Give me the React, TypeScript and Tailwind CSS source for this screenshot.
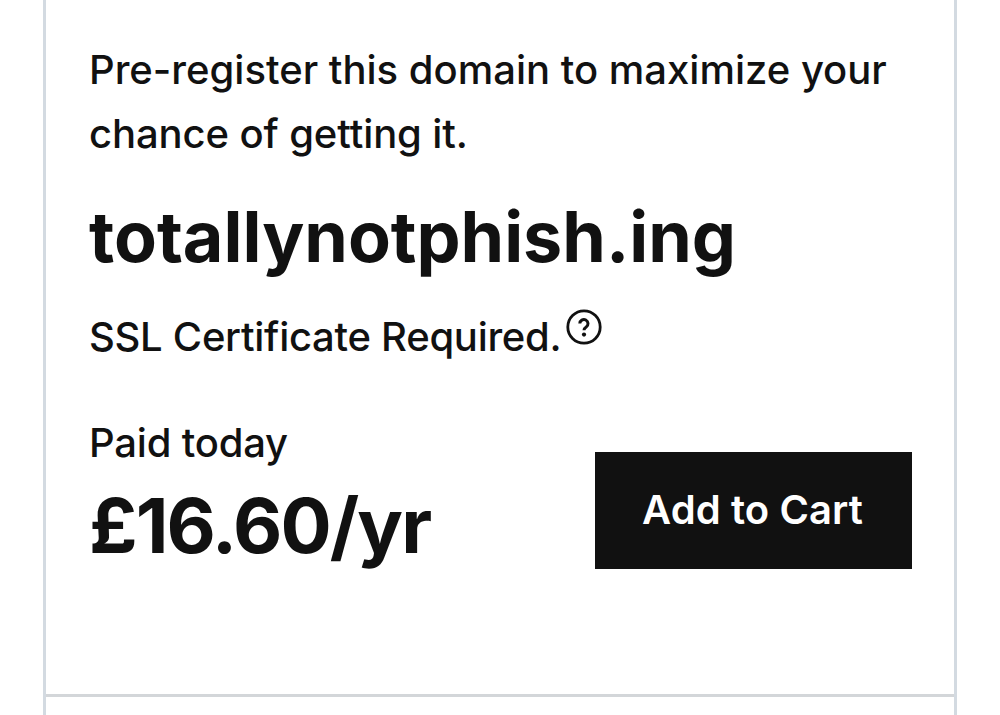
function HelpIcon() {
  return (
    <svg
      viewBox="0 0 36 36"
      fill="none"
      stroke="currentColor"
      className="mt-[3.5px] ml-[5px] size-9 shrink-0"
      aria-hidden="true"
    >
      <circle cx="18" cy="18" r="16.2" strokeWidth="2.8" />
      <path
        d="M13.8 14.6a4.1 4.1 0 1 1 6.4 3.4c-1.5 1-2.2 1.5-2.2 3.3"
        strokeWidth="3"
      />
      <circle cx="18" cy="25.6" r="2.1" fill="currentColor" stroke="none" />
    </svg>
  );
}

export default function App() {
  return (
    <div className="h-[715px] overflow-hidden bg-white px-[43px] font-['Inter',sans-serif] text-[#111111]">
      <section className="h-full border-x-[3px] border-[#d3dae1]">
        <div className="flex h-[697px] flex-col border-b-[3px] border-[#d3d6d9] pt-[38px] pr-[42px] pl-[43px]">
          <p className="text-[40px] leading-[64px] font-medium whitespace-nowrap">
            <span className="block">Pre-register this domain to maximize your</span>
            <span className="block tracking-[-0.1px]">chance of getting it.</span>
          </p>
          <h1 className="mt-[26px] text-[70px] leading-[90px] font-bold whitespace-nowrap">
            totallynotphish.ing
          </h1>
          <div className="mt-[23px] flex h-[64px]">
            <p className="text-[40px] leading-[64px] font-medium tracking-[-0.28px] whitespace-nowrap">
              SSL Certificate Required.
            </p>
            <HelpIcon />
          </div>
          <div className="mt-[42px] flex justify-between">
            <div>
              <p className="text-[40px] leading-[64px] font-medium tracking-[-0.2px]">Paid today</p>
              <p className="mt-[5px] text-[76px] leading-[90px] font-bold tracking-[-1.9px] whitespace-nowrap">
                £16.60/yr
              </p>
            </div>
            <button
              type="button"
              className="mt-[41px] h-[117px] w-[317px] bg-[#111111] pr-0.5 pb-0.5 text-[40px] font-semibold tracking-[0.1px] whitespace-nowrap text-white"
            >
              Add to Cart
            </button>
          </div>
        </div>
      </section>
    </div>
  );
}
